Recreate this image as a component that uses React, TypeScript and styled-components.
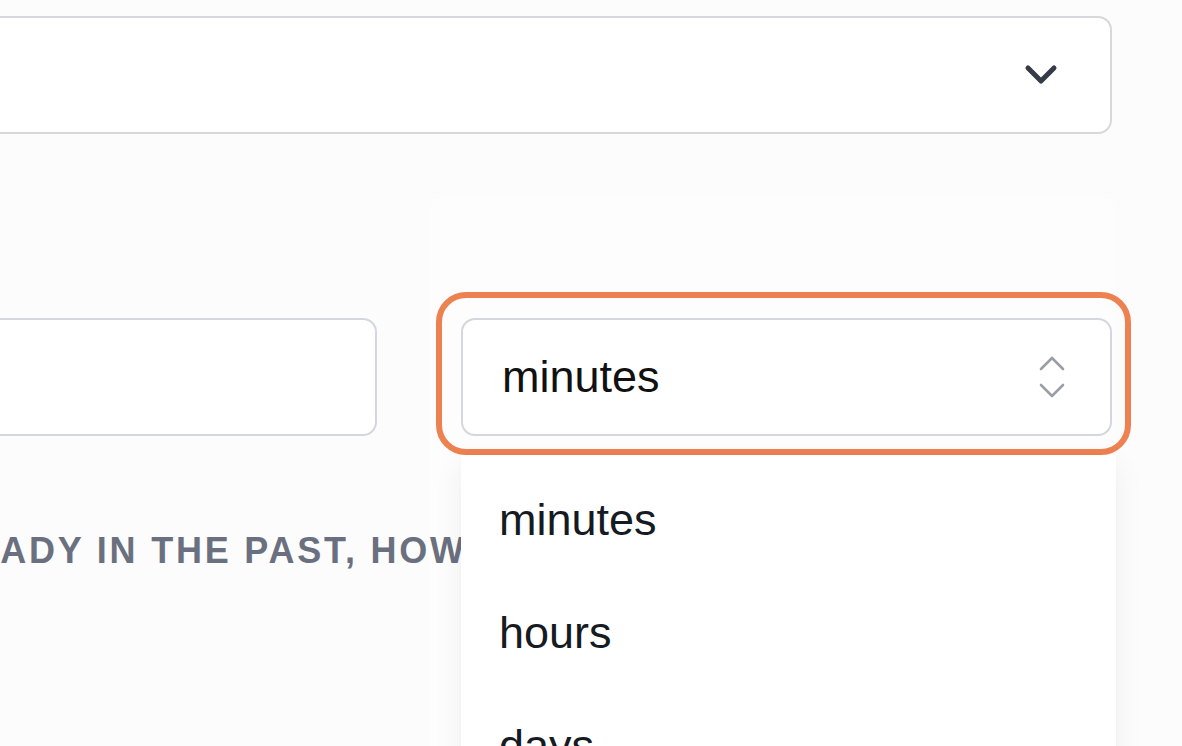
import React from "react";
import styled, { createGlobalStyle } from "styled-components";

const Global = createGlobalStyle`
  html {
    background: #fcfcfc;
  }
  html, body {
    margin: 0;
    padding: 0;
    overflow: hidden;
    width: 1182px;
    height: 746px;
  }
  * { box-sizing: border-box; }
`;

const Form = styled.div`
  margin-left: -274px;
  width: 1386px;
  padding-top: 16px;
  display: flex;
  flex-direction: column;
  font-family: "Liberation Sans", Arial, sans-serif;
`;

const TopSelect = styled.div`
  height: 118px;
  border: 2px solid #d6d8dc;
  border-radius: 14px;
  background: #ffffff;
  display: flex;
  align-items: center;
  justify-content: flex-end;
  padding-right: 52px;
`;

const Row = styled.div`
  margin-top: 184px;
  display: grid;
  grid-template-columns: 651px 651px;
  column-gap: 84px;
`;

const Input = styled.div`
  height: 118px;
  border: 2px solid #d4d7dd;
  border-radius: 14px;
  background: #ffffff;
`;

const SelectWrap = styled.div`
  position: relative;
`;

const Backdrop = styled.div`
  position: absolute;
  z-index: -1;
  top: -121px;
  left: -31px;
  right: -3px;
  height: 600px;
  background: #fdfdfd;
  border-radius: 12px;
`;

const Ring = styled.div`
  position: absolute;
  top: -26px;
  left: -25px;
  right: -19px;
  bottom: -19px;
  border: 6px solid #ee8150;
  border-radius: 30px;
`;

const Select = styled.div`
  position: relative;
  height: 118px;
  border: 2px solid #d4d7dd;
  border-radius: 14px;
  background: #ffffff;
  display: flex;
  align-items: center;
  justify-content: space-between;
  padding: 0 44px 0 39px;
  font-size: 45px;
  color: #111111;
`;

const Menu = styled.ul`
  position: absolute;
  z-index: 2;
  top: calc(100% + 19px);
  left: 0;
  right: -4px;
  margin: 0;
  padding: 8px 0 0;
  list-style: none;
  background: #ffffff;
  box-shadow: 0 10px 30px rgba(0, 0, 0, 0.06), 0 0 4px rgba(0, 0, 0, 0.025);
  height: 400px;
`;

const MenuItem = styled.li`
  height: 113px;
  display: flex;
  align-items: center;
  padding-left: 38px;
  font-size: 45px;
  color: #161a22;
`;

const Label = styled.div`
  margin-top: 94px;
  margin-left: 165px;
  font-size: 36px;
  font-weight: 700;
  letter-spacing: 2.8px;
  text-transform: uppercase;
  color: #6b7080;
  white-space: nowrap;
`;

const ChevronDown = () => (
  <svg width="34" height="22" viewBox="0 0 34 22" fill="none">
    <path d="M4 4 L17 17 L30 4" stroke="#353b47" strokeWidth="5" strokeLinecap="round" strokeLinejoin="round" />
  </svg>
);

const UpDown = () => (
  <svg width="28" height="46" viewBox="0 0 28 46" fill="none">
    <path d="M3 15 L14 4 L25 15" stroke="#9a9ea6" strokeWidth="2.6" strokeLinecap="round" strokeLinejoin="round" />
    <path d="M3 31 L14 42 L25 31" stroke="#9a9ea6" strokeWidth="2.6" strokeLinecap="round" strokeLinejoin="round" />
  </svg>
);

export default function App() {
  return (
    <>
      <Global />
      <Form>
        <TopSelect>
          <ChevronDown />
        </TopSelect>
        <Row>
          <Input />
          <SelectWrap>
            <Backdrop />
            <Ring />
            <Select>
              <span>minutes</span>
              <UpDown />
            </Select>
            <Menu>
              <MenuItem>minutes</MenuItem>
              <MenuItem>hours</MenuItem>
              <MenuItem>days</MenuItem>
            </Menu>
          </SelectWrap>
        </Row>
        <Label>Already in the past, how long ago?</Label>
      </Form>
    </>
  );
}
